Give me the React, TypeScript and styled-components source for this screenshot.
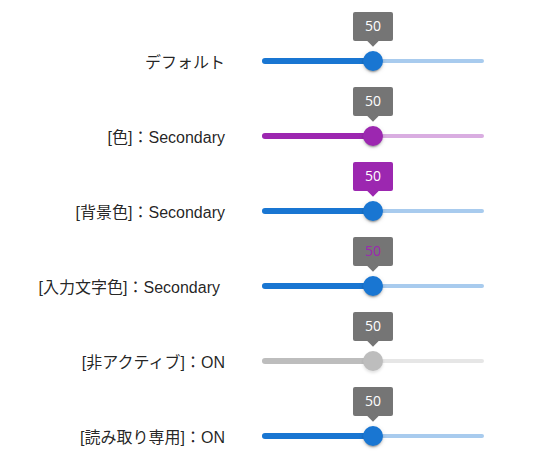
import React, { FC } from "react";
import styled, { createGlobalStyle } from "styled-components";

const colors = {
  primary: "#1976d2",
  secondary: "#9c27b0",
  disabled: "#bdbdbd",
  labelBg: "#757575",
  text: "rgba(0, 0, 0, 0.87)",
};

const GlobalStyle = createGlobalStyle`
  body {
    margin: 0;
    background: #ffffff;
    font-family: "Liberation Sans", "Noto Sans CJK JP", sans-serif;
  }
`;

const Page = styled.div`
  display: flex;
  flex-direction: column;
  padding-top: 23px;
`;

const Row = styled.div`
  display: grid;
  grid-template-columns: 225px 222px;
  column-gap: 37px;
  align-items: center;
  height: 75px;
`;

const Label = styled.div<{ $pad?: number }>`
  text-align: right;
  font-size: 16px;
  color: ${colors.text};
  white-space: nowrap;
  padding-right: ${({ $pad }) => $pad || 0}px;
`;

const SliderRoot = styled.div`
  position: relative;
  display: flex;
  align-items: center;
  height: 20px;
`;

const Rail = styled.div<{ $color: string }>`
  flex-grow: 1;
  height: 4px;
  border-radius: 12px;
  background-color: ${({ $color }) => $color};
  opacity: 0.38;
`;

const Track = styled.div<{ $color: string }>`
  position: absolute;
  left: 0;
  top: 50%;
  transform: translateY(-50%);
  height: 6px;
  border-radius: 12px;
  background-color: ${({ $color }) => $color};
`;

const Thumb = styled.div<{ $color: string; $flat?: boolean }>`
  position: absolute;
  top: 50%;
  width: 20px;
  height: 20px;
  border-radius: 50%;
  transform: translate(-50%, -50%);
  background-color: ${({ $color }) => $color};
  box-shadow: ${({ $flat }) =>
    $flat
      ? "0 2px 3px rgba(0,0,0,0.12)"
      : "0 3px 1px -2px rgba(0,0,0,0.2), 0 2px 2px 0 rgba(0,0,0,0.14), 0 1px 5px 0 rgba(0,0,0,0.12)"};
`;

const ValueLabel = styled.div<{ $bg: string; $fg: string }>`
  position: absolute;
  bottom: 30px;
  left: 50%;
  transform: translateX(-50%);
  padding: 4px 12px 5px;
  border-radius: 2px;
  background-color: ${({ $bg }) => $bg};
  color: ${({ $fg }) => $fg};
  font-family: "Open Sans", Roboto, sans-serif;
  font-size: 14px;
  font-weight: 400;
  line-height: 20px;
  white-space: nowrap;

  &::before {
    content: "";
    position: absolute;
    left: 50%;
    bottom: 0;
    width: 8px;
    height: 8px;
    background-color: inherit;
    transform: translate(-50%, 50%) rotate(45deg);
  }
`;

const LabelText = styled.span`
  position: relative;
  z-index: 1;
`;

type SliderProps = {
  value: number;
  color: string;
  labelBg?: string;
  labelFg?: string;
  disabled?: boolean;
};

const Slider: FC<SliderProps> = ({
  value,
  color,
  labelBg = colors.labelBg,
  labelFg = "#ffffff",
  disabled = false,
}) => {
  const c = disabled ? colors.disabled : color;
  const pct = `${value}%`;
  return (
    <SliderRoot>
      <Rail $color={c} />
      <Track $color={c} style={{ width: pct }} />
      <Thumb $color={c} $flat={disabled} style={{ left: pct }}>
        <ValueLabel $bg={labelBg} $fg={labelFg}>
          <LabelText>{value}</LabelText>
        </ValueLabel>
      </Thumb>
    </SliderRoot>
  );
};

const rows = [
  { label: "デフォルト", props: { color: colors.primary } },
  { label: "[色]：Secondary", props: { color: colors.secondary } },
  {
    label: "[背景色]：Secondary",
    props: { color: colors.primary, labelBg: colors.secondary },
  },
  {
    label: "[入力文字色]：Secondary",
    pad: 5,
    props: { color: colors.primary, labelFg: colors.secondary },
  },
  { label: "[非アクティブ]：ON", props: { color: colors.primary, disabled: true } },
  { label: "[読み取り専用]：ON", props: { color: colors.primary } },
];

const App: FC = () => {
  return (
    <>
      <GlobalStyle />
      <Page>
        {rows.map((r) => (
          <Row key={r.label}>
            <Label $pad={r.pad}>{r.label}</Label>
            <Slider value={50} {...r.props} />
          </Row>
        ))}
      </Page>
    </>
  );
};

export default App;
